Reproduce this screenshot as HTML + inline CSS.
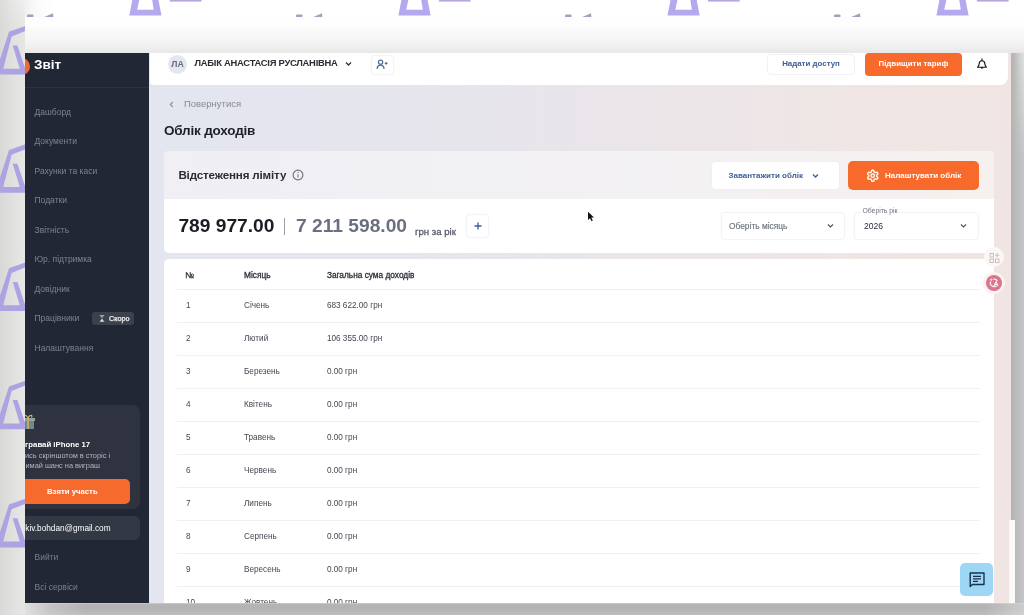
<!DOCTYPE html>
<html><head><meta charset="utf-8">
<style>
*{margin:0;padding:0;box-sizing:border-box}
html,body{width:1024px;height:615px;overflow:hidden;position:relative;font-family:"Liberation Sans",sans-serif;background:#f7f7f7}
.a{position:absolute}
#bg{left:0;top:0;width:1024px;height:615px;background:linear-gradient(90deg,#dcdcdb 0px,#e6e6e5 12px,#efefee 24px,#f7f7f7 32px,#fcfcfc 42px,#ffffff 55px)}
#leftcol{left:0;top:4px;width:24.5px;height:611px;background:linear-gradient(90deg,#d8d8d7 0px,#e0e0de 12px,#e6e6e5 24.5px);-webkit-mask-image:linear-gradient(180deg,transparent 0px,#000 22px)}
#topshade{left:24.5px;top:17px;width:999.5px;height:36px;background:linear-gradient(180deg,#fdfdfd 0px,#fefefe 8px,#fafafa 12px,#f6f6f6 22px,#f0f0f0 30px,#eaeaea 34px,#e8e8e8 36px)}
#sidebar{left:25px;top:53px;width:124.1px;height:550px;background:#212734;overflow:hidden}
#main{left:149.5px;top:53px;width:861px;height:550px;background:linear-gradient(90deg,#e3e5f0 0%,#e7e5ec 40%,#efe6e5 80%,#f0e5e2 100%);overflow:hidden}
#rightband{left:1010.5px;top:53px;width:13.5px;height:562px;background:linear-gradient(90deg,#b3b3b3 0px,#bababa 4px,#c0c0c2 9px,#c6c6c8 13.5px)}
#rbtop{left:1010.5px;top:53px;width:13.5px;height:110px;background:linear-gradient(90deg,rgba(230,230,230,0) 3px,rgba(230,230,230,0.85) 13.5px);-webkit-mask-image:linear-gradient(180deg,#000 0px,transparent 110px)}
#botband{left:25px;top:603px;width:999px;height:12px;background:linear-gradient(90deg,rgba(228,228,228,0.9) 0px,rgba(228,228,228,0.35) 25px,rgba(228,228,228,0) 60px,rgba(228,228,228,0) 960px,rgba(228,228,228,0.5) 999px),linear-gradient(180deg,#cfcfcf 0px,#b4b4b4 1.5px,#b3b3b3 5px,#bdbdbd 100%)}
.th{position:absolute;font-size:8.3px;color:#2c2f38;-webkit-text-stroke:0.3px #2c2f38;line-height:10px;white-space:nowrap;margin-top:0.4px}
.td{position:absolute;font-size:8.2px;color:#444852;line-height:10px;white-space:nowrap}
.tl{position:absolute;left:13.5px;width:802.7px;height:1px;background:#f0f0f2}
.mi{position:absolute;left:9.5px;font-size:8.5px;color:#7f838d;white-space:nowrap;line-height:11px}
</style></head><body>
<div id="wrap" style="position:absolute;left:0;top:0;width:1024px;height:615px;overflow:hidden;filter:blur(0.3px)">
<div id="bg" class="a"></div>
<div id="leftcol" class="a"></div>
<svg class="a" style="left:0;top:0" width="1024" height="615" viewBox="0 0 1024 615">
  <path d="M129.3 15.6 L161.5 15.6 L157.9 -3 L132.9 -3 Z M137.1 9.8 L139.9 -3 L151.7 -3 L153.7 9.8 Z" fill="#b4a8ee" fill-rule="evenodd"/>
  <rect x="169.8" y="-1" width="31.7" height="2.6" fill="#b8a6e0"/>
  <path d="M398.4 15.6 L430.6 15.6 L427.0 -3 L402.0 -3 Z M406.2 9.8 L409.0 -3 L420.8 -3 L422.8 9.8 Z" fill="#b4a8ee" fill-rule="evenodd"/>
  <rect x="438.9" y="-1" width="31.7" height="2.6" fill="#b8a6e0"/>
  <path d="M667.5 15.6 L699.7 15.6 L696.1 -3 L671.1 -3 Z M675.3 9.8 L678.1 -3 L689.9 -3 L691.9 9.8 Z" fill="#b4a8ee" fill-rule="evenodd"/>
  <rect x="708.0" y="-1" width="31.7" height="2.6" fill="#b8a6e0"/>
  <path d="M936.4 15.6 L968.6 15.6 L965.0 -3 L940.0 -3 Z M944.2 9.8 L947.0 -3 L958.8 -3 L960.8 9.8 Z" fill="#b4a8ee" fill-rule="evenodd"/>
  <rect x="976.9" y="-1" width="31.7" height="2.6" fill="#b8a6e0"/>
  <rect x="27.0" y="14.5" width="6.5" height="3" rx="1" fill="#a3a0c0"/>
  <path d="M43.0 17.6 L53.0 13.2 L53.5 17.6 Z" fill="#a5a2c1"/>
  <rect x="296.0" y="14.5" width="6.5" height="3" rx="1" fill="#a3a0c0"/>
  <path d="M312.0 17.6 L322.0 13.2 L322.5 17.6 Z" fill="#a5a2c1"/>
  <rect x="565.0" y="14.5" width="6.5" height="3" rx="1" fill="#a3a0c0"/>
  <path d="M581.0 17.6 L591.0 13.2 L591.5 17.6 Z" fill="#a5a2c1"/>
  <rect x="834.0" y="14.5" width="6.5" height="3" rx="1" fill="#a3a0c0"/>
  <path d="M850.0 17.6 L860.0 13.2 L860.5 17.6 Z" fill="#a5a2c1"/>
  <path d="M9 31.8 L26 25.8 L26 30.7 L11.6 36.5 L3.2 68.8 L26 68.8 L26 74.6 L-4 74.6 L-4 68.8 L-3.1 68.8 Z M12.7 45.5 L17.4 45.5 L25.3 68.8 L19.8 68.8 Z" fill="#ada2e2"/>
  <path d="M9 150.0 L26 144.0 L26 148.9 L11.6 154.7 L3.2 187.0 L26 187.0 L26 192.8 L-4 192.8 L-4 187.0 L-3.1 187.0 Z M12.7 163.7 L17.4 163.7 L25.3 187.0 L19.8 187.0 Z" fill="#ada2e2"/>
  <path d="M9 268.2 L26 262.2 L26 267.1 L11.6 272.9 L3.2 305.2 L26 305.2 L26 311.0 L-4 311.0 L-4 305.2 L-3.1 305.2 Z M12.7 281.9 L17.4 281.9 L25.3 305.2 L19.8 305.2 Z" fill="#ada2e2"/>
  <path d="M9 386.4 L26 380.4 L26 385.3 L11.6 391.1 L3.2 423.4 L26 423.4 L26 429.2 L-4 429.2 L-4 423.4 L-3.1 423.4 Z M12.7 400.1 L17.4 400.1 L25.3 423.4 L19.8 423.4 Z" fill="#ada2e2"/>
  <path d="M9 504.6 L26 498.6 L26 503.5 L11.6 509.3 L3.2 541.6 L26 541.6 L26 547.4 L-4 547.4 L-4 541.6 L-3.1 541.6 Z M12.7 518.3 L17.4 518.3 L25.3 541.6 L19.8 541.6 Z" fill="#ada2e2"/>
</svg>
<div id="topshade" class="a"></div>

<div id="sidebar" class="a">
  <div class="a" style="left:-12.5px;top:4.5px;width:17px;height:17px;border-radius:50%;background:#ee6a35"></div>
  <div class="a" style="left:9px;top:4.5px;font-size:13.5px;font-weight:bold;color:#fff;line-height:14px">Звіт</div>
  <div class="a" style="left:0;top:34px;width:124.5px;height:1px;background:#2c3240"></div>
  <div class="mi" style="top:53.5px">Дашборд</div>
  <div class="mi" style="top:83px">Документи</div>
  <div class="mi" style="top:112.5px">Рахунки та каси</div>
  <div class="mi" style="top:142px">Податки</div>
  <div class="mi" style="top:171.5px">Звітність</div>
  <div class="mi" style="top:201px">Юр. підтримка</div>
  <div class="mi" style="top:230.5px">Довідник</div>
  <div class="mi" style="top:260px">Працівники</div>
  <div class="mi" style="top:289.5px">Налаштування</div>
  <div class="a" style="left:67.3px;top:259px;width:41.7px;height:12.5px;border-radius:3px;background:#3c414d"></div>
  <svg class="a" style="left:74px;top:261.5px" width="6" height="7" viewBox="0 0 6 7"><path d="M0.8 0.6 H5.2 M0.8 6.4 H5.2" stroke="#cfd0d4" stroke-width="0.8"/><path d="M1.3 0.8 L4.7 0.8 L3 3.4 Z" fill="#9a9ca3"/><path d="M3 3.4 L4.8 6.2 L1.2 6.2 Z" fill="#e2e2e2"/></svg>
  <div class="a" style="left:84px;top:260.5px;font-size:7.2px;color:#f2f2f2;-webkit-text-stroke:0.25px #f2f2f2;line-height:10px;white-space:nowrap">Скоро</div>
  <div class="a" style="left:-20px;top:352.3px;width:134.7px;height:103.7px;border-radius:7px;background:#2e333f"></div>
  <svg class="a" style="left:-4px;top:361px" width="14" height="16" viewBox="0 0 14 16"><rect x="1" y="6" width="12" height="9" fill="#6f8a86"/><rect x="0" y="4" width="14" height="3" fill="#8ea7a0"/><rect x="6" y="4" width="2" height="11" fill="#c9a36a"/><path d="M7 4 C5 0 2 1 3.5 3.5 M7 4 C9 0 12 1 10.5 3.5" fill="none" stroke="#d8b27a" stroke-width="1.2"/></svg>
  <div class="a" id="win" style="left:-10.4px;top:386px;font-size:7.8px;font-weight:bold;color:#fff;line-height:11px;white-space:nowrap">Вигравай iPhone 17</div>
  <div class="a" id="pl2" style="left:-11px;top:397.5px;font-size:7.4px;color:#b3b6be;line-height:9px;white-space:nowrap">Ділись скріншотом в сторіс і</div>
  <div class="a" id="pl3" style="left:-11px;top:407.5px;font-size:7.4px;color:#b3b6be;line-height:9px;white-space:nowrap">отримай шанс на виграш</div>
  <div class="a" style="left:-15px;top:426px;width:120.4px;height:24.5px;border-radius:5px;background:#f76a2d"></div>
  <div class="a" id="vz" style="left:22px;top:433px;font-size:7.75px;font-weight:bold;color:#fff;line-height:11px;white-space:nowrap">Взяти участь</div>
  <div class="a" style="left:-20px;top:463px;width:134.8px;height:24.2px;border-radius:6px;background:#333845"></div>
  <div class="a" id="em" style="left:0.3px;top:469.5px;font-size:8.25px;color:#fff;line-height:11px;white-space:nowrap">kiv.bohdan@gmail.com</div>
  <div class="mi" style="top:499px;color:#7b7f89">Вийти</div>
  <div class="mi" style="top:529px;color:#7b7f89">Всі сервіси</div>
</div>

<div class="a" style="left:149px;top:53px;width:1px;height:550px;background:#e3e5f0"></div>
<div id="main" class="a">
  <!-- header (coords relative to main: abs-149.5, abs-53) -->
  <div class="a" style="left:0;top:0;width:858.5px;height:31.5px;background:#fff;border-radius:0 0 8px 4px"></div>
  <div class="a av" style="left:18.5px;top:1.5px;width:19px;height:19px;border-radius:50%;background:#e4e7ef;color:#646a78;font-size:8.8px;font-weight:bold;line-height:19px;text-align:center">ЛА</div>
  <div class="a" id="uname" style="left:45px;top:4.4px;font-size:9.4px;letter-spacing:-0.25px;font-weight:bold;color:#2a2c33;line-height:12px;white-space:nowrap">ЛАБІК АНАСТАСІЯ РУСЛАНІВНА</div>
  <svg class="a" style="left:195.5px;top:8px" width="7" height="6" viewBox="0 0 7 6"><path d="M1 1.5 L3.5 4 L6 1.5" fill="none" stroke="#333" stroke-width="1.3"/></svg>
  <div class="a" style="left:221.6px;top:1.6px;width:22.6px;height:20px;border:1px solid #f3f4f7;border-radius:4px;background:#fff;box-shadow:0 0 2px rgba(0,0,0,0.04)"></div>
  <svg class="a" style="left:225.5px;top:5px" width="14" height="12.7" viewBox="0 0 16 15"><circle cx="6.3" cy="5" r="2.5" fill="none" stroke="#56709a" stroke-width="1.5"/><path d="M2.2 12.3 C2.6 9.6 4.3 8.5 6.3 8.5 C8.3 8.5 10 9.6 10.4 12.3" fill="none" stroke="#56709a" stroke-width="1.5" stroke-linecap="round"/><path d="M11.3 6.3 H14.5 M12.9 4.7 V7.9" stroke="#56709a" stroke-width="1.3"/></svg>

  <div class="a" style="left:617.5px;top:0.5px;width:88px;height:21px;border:1px solid #f1f2f5;border-radius:4px;background:#fff;color:#3f5d94;font-size:7.9px;font-weight:bold;line-height:18.5px;text-align:center">Надати доступ</div>
  <div class="a" style="left:715.3px;top:0px;width:97.2px;height:22.5px;border-radius:4px;background:#f86a2b;color:#fff;font-size:7.9px;font-weight:bold;line-height:22px;text-align:center">Підвищити тариф</div>
  <svg class="a" style="left:826.5px;top:5px" width="12" height="12" viewBox="0 0 12 12"><path d="M6 0.5 V2.7" stroke="#222" stroke-width="1.2"/><path d="M1.6 9.2 C2.6 8 3.1 7 3.2 5.6 C3.4 3.8 4.5 2.8 6 2.8 C7.5 2.8 8.6 3.8 8.8 5.6 C8.9 7 9.4 8 10.4 9.2 Z" fill="none" stroke="#111" stroke-width="1.1" stroke-linejoin="round"/><path d="M4.6 9.3 A1.4 1.4 0 0 0 7.4 9.3 Z" fill="#111"/></svg>

  <!-- breadcrumb & title -->
  <svg class="a" style="left:19px;top:47.5px" width="5" height="7" viewBox="0 0 5 7"><path d="M3.8 1 L1.3 3.5 L3.8 6" fill="none" stroke="#8d909a" stroke-width="1.1"/></svg>
  <div class="a" id="back" style="left:34.5px;top:44.5px;font-size:9.5px;color:#878a96;line-height:12px;white-space:nowrap">Повернутися</div>
  <div class="a" id="title" style="left:14.5px;top:70px;font-size:13.5px;letter-spacing:-0.19px;font-weight:bold;color:#1e2027;line-height:16px;white-space:nowrap">Облік доходів</div>

  <!-- card 1 -->
  <div class="a" style="left:14px;top:98px;width:830px;height:101.5px;border-radius:5px;background:#fff;overflow:hidden">
    <div class="a" style="left:0;top:0;width:830px;height:48.2px;background:linear-gradient(90deg,#efeff4,#f3f1f3 60%,#f6f0ee)"></div>
  </div>
  <div class="a" id="lim" style="left:28.9px;top:115px;font-size:11.6px;letter-spacing:-0.15px;font-weight:bold;color:#2a2d36;line-height:14px;white-space:nowrap">Відстеження ліміту</div>
  <svg class="a" style="left:142.6px;top:116.1px" width="12" height="12" viewBox="0 0 12 12"><circle cx="6" cy="6" r="4.9" fill="none" stroke="#6f737d" stroke-width="1.15"/><path d="M6 5.2 V8.6" stroke="#777b85" stroke-width="1.1"/><circle cx="6" cy="3.6" r="0.7" fill="#777b85"/></svg>
  <div class="a" id="n1" style="left:28.9px;top:163px;font-size:19.2px;font-weight:bold;color:#1b1d24;line-height:20px;white-space:nowrap">789 977.00</div>
  <div class="a" style="left:134px;top:165px;width:1.6px;height:17px;background:#9a9ea8"></div>
  <div class="a" id="n2" style="left:146.5px;top:163px;font-size:19.2px;font-weight:bold;color:#6a707f;line-height:20px;white-space:nowrap">7 211 598.00</div>
  <div class="a" id="grn" style="left:265.5px;top:172.6px;font-size:9.6px;color:#555b68;-webkit-text-stroke:0.3px #555b68;line-height:11px;white-space:nowrap">грн за рік</div>
  <div class="a" style="left:316.3px;top:161px;width:23.7px;height:23.6px;border:1px solid #f3f4f7;border-radius:4px;background:#fff;box-shadow:0 0 2px rgba(0,0,0,0.04)"></div>
  <svg class="a" style="left:323px;top:167.5px" width="10" height="10" viewBox="0 0 10 10"><path d="M5 1.5 V8.5 M1.5 5 H8.5" stroke="#3d5a99" stroke-width="1.3"/></svg>

  <div class="a" style="left:561.5px;top:108px;width:129px;height:28.5px;border-radius:4px;background:#fff;border:1px solid #f1eeee"></div>
  <div class="a" id="zav" style="left:579px;top:117px;font-size:8px;font-weight:bold;color:#3f5d94;line-height:11px;white-space:nowrap">Завантажити облік</div>
  <svg class="a" style="left:662.5px;top:119.5px" width="7" height="6" viewBox="0 0 7 6"><path d="M1 1.5 L3.5 4 L6 1.5" fill="none" stroke="#3f5d94" stroke-width="1.3"/></svg>
  <div class="a" style="left:698.5px;top:108px;width:131.2px;height:28.5px;border-radius:5px;background:#f86a2b"></div>
  <svg class="a" style="left:716.5px;top:115.5px" width="13.5" height="13.5" viewBox="0 0 24 24"><path d="M12.22 2h-.44a2 2 0 0 0-2 2v.18a2 2 0 0 1-1 1.730l-.43.25a2 2 0 0 1-2 0l-.15-.08a2 2 0 0 0-2.73.73l-.22.38a2 2 0 0 0 .73 2.73l.15.1a2 2 0 0 1 1 1.72v.51a2 2 0 0 1-1 1.74l-.15.09a2 2 0 0 0-.73 2.73l.22.38a2 2 0 0 0 2.73.73l.15-.08a2 2 0 0 1 2 0l.43.25a2 2 0 0 1 1 1.73V20a2 2 0 0 0 2 2h.44a2 2 0 0 0 2-2v-.18a2 2 0 0 1 1-1.73l.43-.25a2 2 0 0 1 2 0l.15.08a2 2 0 0 0 2.730-.73l.22-.39a2 2 0 0 0-.73-2.73l-.15-.08a2 2 0 0 1-1-1.74v-.5a2 2 0 0 1 1-1.74l.15-.09a2 2 0 0 0 .73-2.73l-.22-.38a2 2 0 0 0-2.73-.73l-.15.08a2 2 0 0 1-2 0l-.43-.25a2 2 0 0 1-1-1.73V4a2 2 0 0 0-2-2z" fill="none" stroke="#fff3e8" stroke-width="2.7"/><circle cx="12" cy="12" r="3" fill="none" stroke="#fff3e8" stroke-width="2.5"/></svg>
  <div class="a" id="nal" style="left:735.5px;top:117px;font-size:8px;font-weight:bold;color:#fff;line-height:11px;white-space:nowrap">Налаштувати облік</div>

  <div class="a" style="left:571px;top:158.5px;width:124.5px;height:28.7px;border-radius:4px;background:#fff;border:1px solid #f2f3f5;box-shadow:0 0 2px rgba(0,0,0,0.03)"></div>
  <div class="a" id="obm" style="left:579.5px;top:168px;font-size:8.4px;color:#6f7482;-webkit-text-stroke:0.15px #6f7482;line-height:11px;white-space:nowrap">Оберіть місяць</div>
  <svg class="a" style="left:677.5px;top:170px" width="7" height="6" viewBox="0 0 7 6"><path d="M1 1.5 L3.5 4 L6 1.5" fill="none" stroke="#555" stroke-width="1.2"/></svg>
  <div class="a" style="left:704.3px;top:158.5px;width:125.4px;height:28.7px;border-radius:4px;background:#fff;border:1px solid #f2f3f5;box-shadow:0 0 2px rgba(0,0,0,0.03)"></div>
  <div class="a" style="left:711px;top:154px;padding:0 2px;background:#fff;font-size:6.8px;color:#6b7080;line-height:8px;white-space:nowrap">Оберіть рік</div>
  <div class="a" id="y2026" style="left:714.5px;top:168px;font-size:8.6px;color:#2a2d36;line-height:11px;white-space:nowrap">2026</div>
  <svg class="a" style="left:810.5px;top:170px" width="7" height="6" viewBox="0 0 7 6"><path d="M1 1.5 L3.5 4 L6 1.5" fill="none" stroke="#555" stroke-width="1.2"/></svg>

  <!-- table card -->
  <div class="a" id="tbl" style="left:14px;top:206px;width:830px;height:400px;border-radius:5px 5px 0 0;background:#fff">
    <div class="th" style="left:21.5px;top:10.26px">№</div>
    <div class="th" style="left:80.5px;top:10.26px">Місяць</div>
    <div class="th" style="left:163.4px;top:10.26px">Загальна сума доходів</div>
    <div class="tl" style="top:30.00px"></div>
    <div class="td" style="left:22.5px;top:41.76px">1</div>
    <div class="td" style="left:80.5px;top:41.76px">Січень</div>
    <div class="td" style="left:163.4px;top:41.76px">683 622.00 грн</div>
    <div class="tl" style="top:63.03px"></div>
    <div class="td" style="left:22.5px;top:74.79px">2</div>
    <div class="td" style="left:80.5px;top:74.79px">Лютий</div>
    <div class="td" style="left:163.4px;top:74.79px">106 355.00 грн</div>
    <div class="tl" style="top:96.06px"></div>
    <div class="td" style="left:22.5px;top:107.82px">3</div>
    <div class="td" style="left:80.5px;top:107.82px">Березень</div>
    <div class="td" style="left:163.4px;top:107.82px">0.00 грн</div>
    <div class="tl" style="top:129.09px"></div>
    <div class="td" style="left:22.5px;top:140.85px">4</div>
    <div class="td" style="left:80.5px;top:140.85px">Квітень</div>
    <div class="td" style="left:163.4px;top:140.85px">0.00 грн</div>
    <div class="tl" style="top:162.12px"></div>
    <div class="td" style="left:22.5px;top:173.88px">5</div>
    <div class="td" style="left:80.5px;top:173.88px">Травень</div>
    <div class="td" style="left:163.4px;top:173.88px">0.00 грн</div>
    <div class="tl" style="top:195.15px"></div>
    <div class="td" style="left:22.5px;top:206.91px">6</div>
    <div class="td" style="left:80.5px;top:206.91px">Червень</div>
    <div class="td" style="left:163.4px;top:206.91px">0.00 грн</div>
    <div class="tl" style="top:228.18px"></div>
    <div class="td" style="left:22.5px;top:239.94px">7</div>
    <div class="td" style="left:80.5px;top:239.94px">Липень</div>
    <div class="td" style="left:163.4px;top:239.94px">0.00 грн</div>
    <div class="tl" style="top:261.21px"></div>
    <div class="td" style="left:22.5px;top:272.97px">8</div>
    <div class="td" style="left:80.5px;top:272.97px">Серпень</div>
    <div class="td" style="left:163.4px;top:272.97px">0.00 грн</div>
    <div class="tl" style="top:294.24px"></div>
    <div class="td" style="left:22.5px;top:306.00px">9</div>
    <div class="td" style="left:80.5px;top:306.00px">Вересень</div>
    <div class="td" style="left:163.4px;top:306.00px">0.00 грн</div>
    <div class="tl" style="top:327.27px"></div>
    <div class="td" style="left:22.5px;top:339.03px">10</div>
    <div class="td" style="left:80.5px;top:339.03px">Жовтень</div>
    <div class="td" style="left:163.4px;top:339.03px">0.00 грн</div>
  </div>

  <!-- right floating icons -->
  <div class="a" style="left:834.8px;top:194.3px;width:20px;height:20px;border-radius:50%;background:#fbf7f7"></div>
  <svg class="a" style="left:839px;top:198.5px" width="12" height="12" viewBox="0 0 12 12"><g fill="none" stroke="#cbb9bc" stroke-width="0.9"><rect x="1" y="1.5" width="3.5" height="3.5"/><rect x="1" y="7" width="3.5" height="3.5"/><rect x="6.5" y="7" width="3.5" height="3.5"/></g><path d="M8.2 1 V5.4 M6 3.2 H10.4" stroke="#cbb9bc" stroke-width="0.9"/></svg>
  <div class="a" style="left:833.5px;top:219.3px;width:22px;height:22px;border-radius:50%;background:#fbf1f2"></div><div class="a" style="left:836.5px;top:222.3px;width:16px;height:16px;border-radius:50%;background:#d9768c"></div><svg class="a" style="left:838.5px;top:224.3px" width="12" height="12" viewBox="0 0 12 12"><path d="M9.3 4.2 C8.6 2.6 7 1.8 5.3 2.2 M2.6 4.5 C2 6.3 2.8 8.4 4.6 9.3 C6 10 7.6 9.8 8.8 8.8" fill="none" stroke="#fff" stroke-width="1.1"/><path d="M3.2 1 L3.6 2.4 L5 2.8 L3.6 3.2 L3.2 4.6 L2.8 3.2 L1.4 2.8 L2.8 2.4 Z" fill="#fff"/><path d="M6 9 L8 4.5 L10 9 M6.8 7.4 H9.2" fill="none" stroke="#fff" stroke-width="1"/></svg>

  <div class="a" style="left:810.5px;top:509.7px;width:32.8px;height:33.3px;border-radius:5px;background:#9ed7f5"></div>
  <svg class="a" style="left:818px;top:516.5px" width="18" height="18" viewBox="0 0 18 18"><path d="M2.2 3 H16 V14.5 H4.5 L2.2 16.5 Z" fill="none" stroke="#17324f" stroke-width="1.4" stroke-linejoin="round"/><path d="M5 6.3 H13 M5 8.8 H13 M5 11.3 H10" stroke="#17324f" stroke-width="1.3"/></svg>
</div>

<svg class="a" style="left:586px;top:210px" width="10" height="13" viewBox="0 0 10 13"><path d="M2 1.8 L2 10 L4 8.2 L5.6 11.2 L6.8 10.6 L5.3 7.6 L8 7.4 Z" fill="#111"/></svg>
<div id="rightband" class="a"></div>
<div id="rbtop" class="a"></div>
<div class="a" style="left:1008.8px;top:520px;width:6.2px;height:83px;background:#fafafa"></div>
<div id="botband" class="a"></div>
</div>
</body></html>
